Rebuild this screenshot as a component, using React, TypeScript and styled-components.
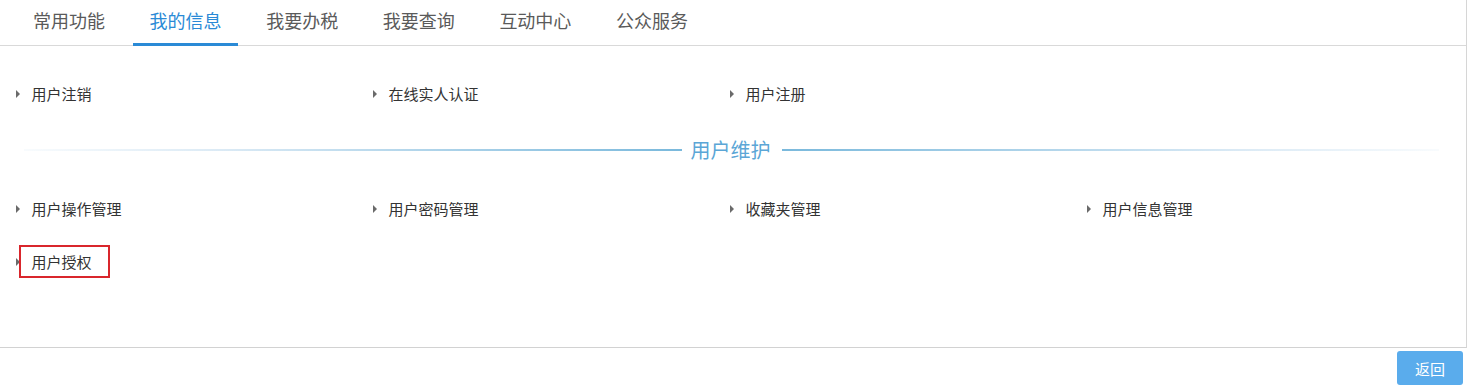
import React from "react"
import styled, { createGlobalStyle } from "styled-components"

const GlobalStyle = createGlobalStyle`
	html, body {
		margin: 0;
		padding: 0;
		background: #fff;
	}
	body {
		font-family: "Microsoft YaHei", "Noto Sans CJK SC", "Noto Sans", sans-serif;
	}
`

const SPage = styled.div`
	width: 1467px;
	height: 390px;
	display: flex;
	flex-direction: column;
	overflow: hidden;
`

const SPanel = styled.div`
	display: flex;
	flex-direction: column;
	height: 348px;
	box-sizing: border-box;
	border-right: 1px solid #d6d6d6;
	border-bottom: 1px solid #d2d2d2;
`

const STabBar = styled.div`
	display: flex;
	height: 46px;
	box-sizing: border-box;
	padding-left: 16.5px;
	gap: 11.6px;
	border-bottom: 1px solid #d9d9d9;
`

const STab = styled.div<{ $active?: boolean }>`
	display: flex;
	align-items: center;
	justify-content: center;
	height: 46px;
	box-sizing: border-box;
	padding: 0 16.5px 3px;
	font-size: 18px;
	color: ${(p) => (p.$active ? "#2a8ad6" : "#5a5a5a")};
	border-bottom: 3px solid ${(p) => (p.$active ? "#2a8ad6" : "transparent")};
	cursor: pointer;
`

const SContent = styled.div`
	padding: 21px 0 0 16px;
`

const SGrid = styled.div`
	display: grid;
	grid-template-columns: repeat(4, 357px);
	grid-auto-rows: 53px;
`

const SItem = styled.div`
	position: relative;
	display: flex;
	align-items: center;
	font-size: 15px;
	color: #333;
	cursor: pointer;
`

const SArrow = styled.span`
	width: 0;
	height: 0;
	border-top: 4px solid transparent;
	border-bottom: 4px solid transparent;
	border-left: 4.5px solid #6a6a6a;
	margin-right: 11.5px;
`

const SMark = styled.span`
	position: absolute;
	left: 3px;
	top: 10px;
	width: 91px;
	height: 33px;
	box-sizing: border-box;
	border: 2px solid #d9262c;
	pointer-events: none;
`

const SDivider = styled.div`
	display: flex;
	align-items: center;
	gap: 11px;
	height: 20px;
	margin: 20px 27px 22px 8px;
`

const SLine = styled.div<{ $side: "left" | "right" }>`
	flex: 1;
	height: 2px;
	background: linear-gradient(
		${(p) => (p.$side === "left" ? "to right" : "to left")},
		rgba(220, 236, 246, 0.2),
		#dbeaf5 30%,
		#7ab9dc
	);
`

const STitle = styled.div`
	font-size: 20px;
	color: #5ba6d6;
	line-height: 20px;
	margin-left: -2px;
`

const SFooter = styled.div`
	display: flex;
	justify-content: flex-end;
	padding: 3px 4px 0 0;
`

const SButton = styled.div`
	display: flex;
	align-items: center;
	justify-content: center;
	width: 66px;
	height: 34px;
	border-radius: 3px;
	background-color: #5aacec;
	color: #fff;
	font-size: 15px;
	cursor: pointer;
`

const tabs = ["常用功能", "我的信息", "我要办税", "我要查询", "互动中心", "公众服务"]
const topItems = ["用户注销", "在线实人认证", "用户注册"]
const maintainItems = ["用户操作管理", "用户密码管理", "收藏夹管理", "用户信息管理", "用户授权"]

export default function App() {
	return (
		<SPage>
			<GlobalStyle />
			<SPanel>
				<STabBar>
					{tabs.map((t) => (
						<STab key={t} $active={t === "我的信息"}>
							{t}
						</STab>
					))}
				</STabBar>
				<SContent>
					<SGrid>
						{topItems.map((t) => (
							<SItem key={t}>
								<SArrow />
								{t}
							</SItem>
						))}
					</SGrid>
					<SDivider>
						<SLine $side="left" />
						<STitle>用户维护</STitle>
						<SLine $side="right" />
					</SDivider>
					<SGrid>
						{maintainItems.map((t) => (
							<SItem key={t}>
								<SArrow />
								{t}
								{t === "用户授权" && <SMark />}
							</SItem>
						))}
					</SGrid>
				</SContent>
			</SPanel>
			<SFooter>
				<SButton>返回</SButton>
			</SFooter>
		</SPage>
	)
}
